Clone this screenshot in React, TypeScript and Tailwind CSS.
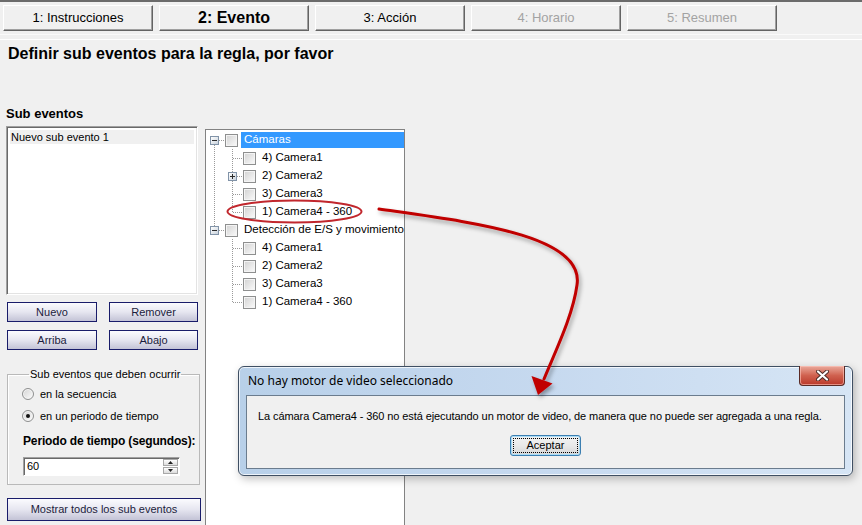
import React from "react";

type TabT = { label: string; state: "normal" | "active" | "disabled" };
const tabs: TabT[] = [
  { label: "1: Instrucciones", state: "normal" },
  { label: "2: Evento", state: "active" },
  { label: "3: Acción", state: "normal" },
  { label: "4: Horario", state: "disabled" },
  { label: "5: Resumen", state: "disabled" },
];

function Tab({ t }: { t: TabT }) {
  const text =
    t.state === "active"
      ? "text-[16px] font-bold text-black"
      : t.state === "disabled"
      ? "text-[13px] text-[#a3a3a3]"
      : "text-[13px] text-black";
  return (
    <div
      className={
        "flex h-[26px] w-[150px] items-center justify-center border-l border-t border-b border-r border-l-white border-t-white border-b-[#646464] border-r-[#646464] bg-[#f0f0f0] shadow-[inset_-1px_-1px_0_#a0a0a0] " +
        text
      }
    >
      {t.label}
    </div>
  );
}

function WinButton({ children, className }: { children: React.ReactNode; className: string }) {
  return (
    <div
      className={
        "flex items-center justify-center whitespace-nowrap border border-[#191c6a] bg-gradient-to-b from-[#fbfbfe] via-[#e6e6f0] to-[#c3c3d6] text-[11px] text-[#1c1c3c] " +
        className
      }
    >
      {children}
    </div>
  );
}

function CheckBox() {
  return (
    <span className="block h-[13px] w-[13px] shrink-0 border border-[#8e8f8f] bg-gradient-to-br from-[#d2d2d2] to-[#fbfbfb] shadow-[inset_1px_1px_0_#f4f4f4,inset_-1px_-1px_0_#f4f4f4]" />
  );
}

function Expander({ plus }: { plus?: boolean }) {
  return (
    <span className="relative block h-[9px] w-[9px] shrink-0 border border-[#8193a8] bg-gradient-to-br from-white to-[#c9d2dc]">
      <span className="absolute left-[1px] top-[3px] h-px w-[5px] bg-[#2a2a2a]" />
      {plus && <span className="absolute left-[3px] top-[1px] h-[5px] w-px bg-[#2a2a2a]" />}
    </span>
  );
}

type RowT = { level: 0 | 1; label: string; exp?: "minus" | "plus"; selected?: boolean };
const rows: RowT[] = [
  { level: 0, label: "Cámaras", exp: "minus", selected: true },
  { level: 1, label: "4) Camera1" },
  { level: 1, label: "2) Camera2", exp: "plus" },
  { level: 1, label: "3) Camera3" },
  { level: 1, label: "1) Camera4 - 360" },
  { level: 0, label: "Detección de E/S y movimiento en video", exp: "minus" },
  { level: 1, label: "4) Camera1" },
  { level: 1, label: "2) Camera2" },
  { level: 1, label: "3) Camera3" },
  { level: 1, label: "1) Camera4 - 360" },
];

function TreeRow({ r }: { r: RowT }) {
  return (
    <div className="flex h-[18px] items-center whitespace-nowrap">
      {r.level === 0 ? (
        <>
          <span className="ml-[4px]">
            <Expander />
          </span>
          <span className="ml-[6px]">
            <CheckBox />
          </span>
        </>
      ) : r.exp === "plus" ? (
        <>
          <span className="ml-[22px]">
            <Expander plus />
          </span>
          <span className="ml-[6px]">
            <CheckBox />
          </span>
        </>
      ) : (
        <span className="ml-[37px]">
          <CheckBox />
        </span>
      )}
      {r.selected ? (
        <span className="ml-[3px] flex h-[16px] flex-1 items-center bg-[#3399ff] px-[3px] text-[11.5px] text-white">
          {r.label}
        </span>
      ) : (
        <span className="ml-[3px] flex h-[16px] items-center px-[3px] text-[11.5px] text-black">{r.label}</span>
      )}
    </div>
  );
}

function TreeLines() {
  const d = "#9a9a9a";
  const hz = (y: number, x1: number, x2: number) => (
    <line key={"h" + y} x1={x1} y1={y + 0.5} x2={x2} y2={y + 0.5} stroke={d} strokeDasharray="1 1" />
  );
  return (
    <svg className="pointer-events-none absolute left-0 top-[1px]" width="200" height="200">
      <line x1="8.5" y1="14" x2="8.5" y2="95" stroke={d} strokeDasharray="1 1" />
      {hz(9, 13, 19)}
      {hz(99, 13, 19)}
      <line x1="26.5" y1="18" x2="26.5" y2="82" stroke={d} strokeDasharray="1 1" />
      <line x1="26.5" y1="108" x2="26.5" y2="172" stroke={d} strokeDasharray="1 1" />
      {hz(27, 27, 37)}
      {hz(45, 31, 37)}
      {hz(63, 27, 37)}
      {hz(81, 27, 37)}
      {hz(117, 27, 37)}
      {hz(135, 27, 37)}
      {hz(153, 27, 37)}
      {hz(171, 27, 37)}
    </svg>
  );
}

function Radio({ checked }: { checked?: boolean }) {
  return (
    <span className="relative block h-[12px] w-[12px] shrink-0 rounded-full border border-[#8e8f8f] bg-gradient-to-br from-[#d4d4d4] to-[#fcfcfc] shadow-[inset_0_0_0_1px_#f6f6f6]">
      {checked && <span className="absolute left-[3px] top-[3px] h-[4px] w-[4px] rounded-full bg-[#111]" />}
    </span>
  );
}

export default function App() {
  return (
    <div className="relative h-[525px] w-[862px] overflow-hidden bg-[#f0f0f0] font-['Liberation_Sans',Arial,sans-serif] text-[11px] text-black">
      <div className="h-[2px] bg-[#6b6b6b]" />
      <div className="flex gap-[6px] pl-[3px] pt-[3px]">
        {tabs.map((t) => (
          <Tab key={t.label} t={t} />
        ))}
      </div>
      <div className="mt-[3px] h-px bg-[#fafafa]" />
      <div className="mt-[4px] h-px bg-white" />
      <h1 className="mt-[4px] pl-[8px] text-[16px] font-bold leading-[20px]">
        Definir sub eventos para la regla, por favor
      </h1>

      <div className="mt-[42px] flex items-start">
        {/* left column */}
        <div className="ml-[6px] flex w-[195px] flex-col">
          <div className="text-[13px] font-bold leading-[16px]">Sub eventos</div>
          <div className="mt-[4px] h-[169px] w-[192px] border border-b-white border-l-[#a0a0a0] border-r-white border-t-[#a0a0a0] bg-white shadow-[inset_1px_1px_0_#696969,inset_-1px_-1px_0_#e3e3e3]">
            <div className="mx-[3px] mt-[3px] flex h-[14px] items-center bg-[#f0f0f0] pl-[1px] text-[11px]">
              Nuevo sub evento 1
            </div>
          </div>
          <div className="mt-[7px] grid grid-cols-[90px_89px] gap-x-[12px] gap-y-[8px] pl-[1px]">
            <WinButton className="h-[20px]">Nuevo</WinButton>
            <WinButton className="h-[20px]">Remover</WinButton>
            <WinButton className="h-[20px]">Arriba</WinButton>
            <WinButton className="h-[20px]">Abajo</WinButton>
          </div>
          <fieldset className="ml-[1px] mt-[18px] w-[193px] border border-[#b9b9b9] pb-[8px] pl-[15px] shadow-[inset_1px_1px_0_#fff]">
            <legend className="ml-[6px] px-[1px] text-[11px] leading-[13px]">Sub eventos que deben ocurrir</legend>
            <div className="mt-[5px] flex h-[16px] items-center">
              <span className="-ml-px">
                <Radio />
              </span>
              <span className="ml-[6px]">en la secuencia</span>
            </div>
            <div className="mt-[6px] flex h-[16px] items-center">
              <span className="-ml-px">
                <Radio checked />
              </span>
              <span className="ml-[6px]">en un periodo de tiempo</span>
            </div>
            <div className="mt-[10px] whitespace-nowrap text-[12px] font-bold leading-[15px] tracking-[-0.15px]">
              Periodo de tiempo (segundos):
            </div>
            <div className="mt-[8px] flex h-[19px] w-[157px] items-center border border-b-white border-l-[#a0a0a0] border-r-white border-t-[#a0a0a0] bg-white shadow-[inset_1px_1px_0_#696969]">
              <span className="flex-1 pl-[3px] text-[11px]">60</span>
              <div className="mr-[1px] flex flex-col gap-px">
                <span className="flex h-[7px] w-[15px] items-center justify-center border border-[#a8a8a8] bg-gradient-to-b from-white to-[#dcdcdc]">
                  <svg width="5" height="3" viewBox="0 0 5 3">
                    <path d="M2.5 0 L5 3 L0 3 Z" fill="#222" />
                  </svg>
                </span>
                <span className="flex h-[7px] w-[15px] items-center justify-center border border-[#a8a8a8] bg-gradient-to-b from-white to-[#dcdcdc]">
                  <svg width="5" height="3" viewBox="0 0 5 3">
                    <path d="M0 0 L5 0 L2.5 3 Z" fill="#222" />
                  </svg>
                </span>
              </div>
            </div>
          </fieldset>
          <WinButton className="ml-[1px] mt-[13px] h-[23px] w-[194px]">Mostrar todos los sub eventos</WinButton>
        </div>

        {/* tree panel */}
        <div className="relative ml-[4px] mt-[23px] h-[396px] w-[200px] overflow-hidden border-l border-r border-t border-[#828282] bg-white">
          <TreeLines />
          <div className="relative flex flex-col pt-[1px]">
            {rows.map((r, i) => (
              <TreeRow key={i} r={r} />
            ))}
          </div>
        </div>
      </div>

      {/* dialog window */}
      <div className="absolute left-[238px] top-[366px] flex h-[110px] w-[615px] flex-col rounded-[6px] border border-[#3f4f63] bg-gradient-to-r from-[#b8d0e9] via-[#c6d9ef] to-[#d6e5f5] shadow-[inset_0_0_0_1px_rgba(255,255,255,0.75),2px_3px_8px_rgba(0,0,0,0.25)]">
        <div className="relative flex h-[28px] items-center pl-[9px] font-['Noto_Sans',sans-serif] text-[12px] text-black">
          No hay motor de video seleccionado
          <div className="absolute right-[7px] top-[-1px] flex h-[20px] w-[46px] items-center justify-center rounded-b-[4px] border border-t-0 border-[#5a2a25] bg-gradient-to-b from-[#e9a99c] via-[#d0614f] to-[#b9372a] shadow-[inset_0_0_0_1px_rgba(255,200,190,0.6)]">
            <svg width="13" height="11" viewBox="0 0 13 11">
              <path d="M2 1.5 L11 9.5 M11 1.5 L2 9.5" stroke="#4b2a26" strokeWidth="4" strokeLinecap="round" />
              <path d="M2 1.5 L11 9.5 M11 1.5 L2 9.5" stroke="#ffffff" strokeWidth="2.2" strokeLinecap="round" />
            </svg>
          </div>
        </div>
        <div className="mx-[7px] mb-[6px] flex flex-1 flex-col items-center border border-[#6b7c8e] bg-[#f0f0f0]">
          <div className="mt-[13px] w-full whitespace-nowrap pl-[11px] text-[11px] leading-[14px] tracking-[-0.09px]">
            La cámara Camera4 - 360 no está ejecutando un motor de video, de manera que no puede ser agregada a una regla.
          </div>
          <div className="mt-[12px] flex h-[21px] w-[71px] items-center justify-center rounded-[3px] border border-[#3c7fb1] bg-gradient-to-b from-[#f3f3f3] via-[#e9e9e9] to-[#d6d6d6] p-[2px] shadow-[inset_0_0_0_1px_#a9dcf7]">
            <span className="flex h-full w-full items-center justify-center border border-dotted border-black text-[11px]">
              Aceptar
            </span>
          </div>
        </div>
      </div>

      {/* annotation overlay */}
      <svg className="pointer-events-none absolute left-0 top-0" width="862" height="525" viewBox="0 0 862 525">
        <defs>
          <filter id="sh" x="-20%" y="-20%" width="140%" height="140%">
            <feDropShadow dx="2" dy="3" stdDeviation="2" floodColor="#000" floodOpacity="0.35" />
          </filter>
        </defs>
        <ellipse cx="294.5" cy="211.5" rx="67" ry="11" fill="none" stroke="#c1272d" strokeWidth="2" />
        <g filter="url(#sh)">
          <path
            d="M379 209 C 470 222, 585 235, 577 285 C 573 315, 556 350, 544 379"
            fill="none"
            stroke="#c00000"
            strokeWidth="3"
            strokeLinecap="round"
          />
          <path d="M538 395 L531.5 376 L552.5 383.5 Z" fill="#c00000" />
        </g>
      </svg>
    </div>
  );
}
